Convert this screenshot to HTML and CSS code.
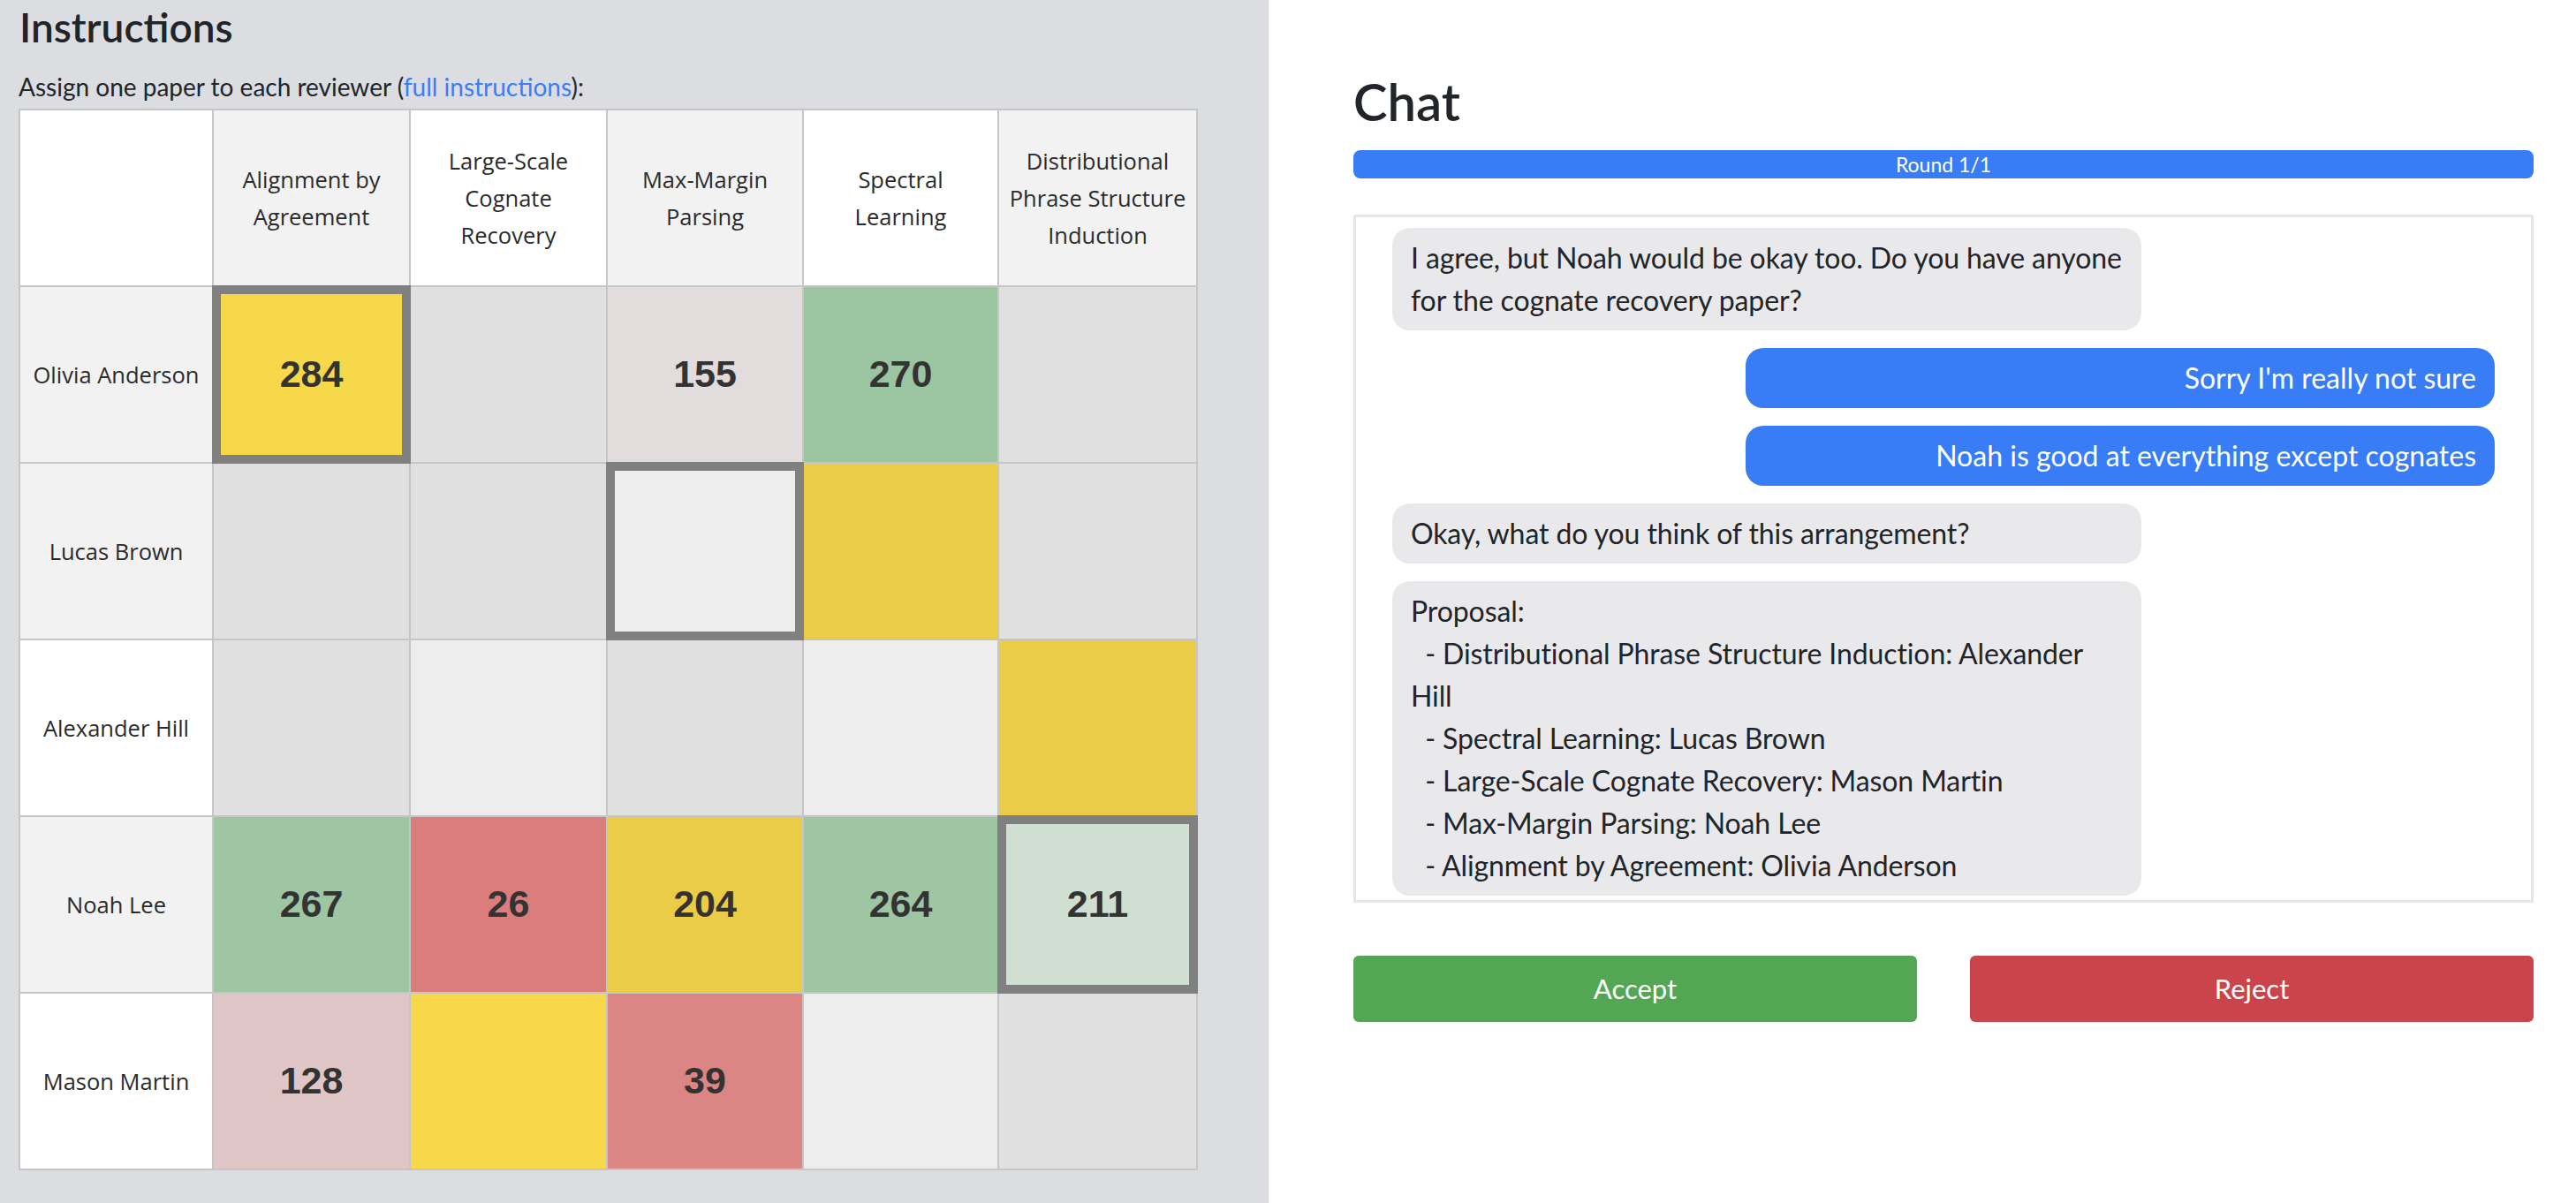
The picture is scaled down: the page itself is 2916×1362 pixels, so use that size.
FILE: index.html
```html
<!DOCTYPE html>
<html lang="en">
<head>
<meta charset="utf-8">
<title>Reviewer assignment</title>
<link rel="stylesheet" href="styles.css">
</head>
<body>
<div class="page">
  <section class="left">
    <h2 class="title">Instructions</h2>
    <p class="lead">Assign one paper to each reviewer (<a href="#" class="link">full instructions</a>):</p>
    <table class="grid">
      <colgroup><col class="w-name"><col class="w-221"><col class="w-221"><col class="w-220"><col class="w-219"><col></colgroup>
      <thead>
        <tr>
          <th class="bg-white"></th>
          <th class="bg-soft">Alignment by Agreement</th>
          <th class="bg-white">Large-Scale Cognate Recovery</th>
          <th class="bg-soft">Max-Margin Parsing</th>
          <th class="bg-white">Spectral Learning</th>
          <th class="bg-soft wide">Distributional Phrase Structure Induction</th>
        </tr>
      </thead>
      <tbody>
        <tr>
          <th class="bg-soft">Olivia Anderson</th>
          <td class="c-yellow sel">284</td>
          <td class="c-empty"></td>
          <td class="c-rose-lt">155</td>
          <td class="c-green">270</td>
          <td class="c-empty"></td>
        </tr>
        <tr>
          <th class="bg-soft">Lucas Brown</th>
          <td class="c-empty"></td>
          <td class="c-empty"></td>
          <td class="c-light sel"></td>
          <td class="c-gold"></td>
          <td class="c-empty"></td>
        </tr>
        <tr>
          <th class="bg-white">Alexander Hill</th>
          <td class="c-empty"></td>
          <td class="c-light"></td>
          <td class="c-empty"></td>
          <td class="c-light"></td>
          <td class="c-gold"></td>
        </tr>
        <tr>
          <th class="bg-soft">Noah Lee</th>
          <td class="c-green2">267</td>
          <td class="c-red">26</td>
          <td class="c-gold">204</td>
          <td class="c-green2">264</td>
          <td class="c-mint sel">211</td>
        </tr>
        <tr>
          <th class="bg-white">Mason Martin</th>
          <td class="c-rose">128</td>
          <td class="c-yellow"></td>
          <td class="c-red2">39</td>
          <td class="c-light"></td>
          <td class="c-empty"></td>
        </tr>
      </tbody>
    </table>
  </section>
  <section class="right">
    <h2 class="chat-title">Chat</h2>
    <div class="round">Round 1/1</div>
    <div class="chatbox">
      <div class="msg them">I agree, but Noah would be okay too. Do you have anyone for the cognate recovery paper?</div>
      <div class="msg me">Sorry I'm really not sure</div>
      <div class="msg me">Noah is good at everything except cognates</div>
      <div class="msg them">Okay, what do you think of this arrangement?</div>
      <div class="msg them pre">Proposal:
  - Distributional Phrase Structure Induction: Alexander Hill
  - Spectral Learning: Lucas Brown
  - Large-Scale Cognate Recovery: Mason Martin
  - Max-Margin Parsing: Noah Lee
  - Alignment by Agreement: Olivia Anderson</div>
    </div>
    <div class="actions">
      <button class="btn accept">Accept</button>
      <button class="btn reject">Reject</button>
    </div>
  </section>
</div>
</body>
</html>
```

FILE: styles.css
```css
* { box-sizing: border-box; }
html, body {
  margin: 0;
  padding: 0;
  height: 100%;
}
body {
  font-family: Lato, "Open Sans", sans-serif;
  color: #212529;
  background: #ffffff;
}
.page {
  display: flex;
  height: 100vh;
}
.left {
  width: 1436px;
  flex: none;
  background: #dcdde1;
  padding: 0 21px;
}
.title {
  margin: 3px 0 0 1px;
  font-size: 46px;
  font-weight: 600;
  line-height: 1.2;
}
.lead {
  margin: 24px 0 0 0;
  font-size: 28px;
  line-height: 1.2;
}
.link {
  color: #3b7df6;
  text-decoration: none;
}
.grid {
  margin-top: 7px;
  width: 1335px;
  table-layout: fixed;
  border-collapse: separate;
  border-spacing: 2px;
  background: #c6c6c6;
}
.w-name { width: 217px; }
.w-221 { width: 221px; }
.w-220 { width: 220px; }
.w-219 { width: 219px; }
.grid th, .grid td {
  height: 198px;
  padding: 0 10px;
  text-align: center;
  vertical-align: middle;
}
.grid th.wide { padding: 0 4px; }
.grid th {
  font-family: "Open Sans", "Noto Sans", sans-serif;
  font-weight: 400;
  font-size: 25.5px;
  line-height: 42px;
  color: #2b2b2b;
}
.grid td {
  font-family: "Liberation Sans", Arial, sans-serif;
  font-weight: 700;
  font-size: 43px;
  color: #333333;
}
.bg-white { background: #ffffff; }
.bg-soft { background: #f2f2f2; }
.c-empty { background: #e0e0e0; }
.c-light { background: #ededed; }
.c-yellow { background: #f8d84b; }
.c-gold { background: #ebcc47; }
.c-green { background: #9bc5a0; }
.c-green2 { background: #9ec6a3; }
.c-mint { background: #cfe0d2; }
.c-red { background: #db7d7c; }
.c-red2 { background: #db8684; }
.c-rose { background: #e0c6c6; }
.c-rose-lt { background: #e2dcdc; }
.sel {
  outline: 2px solid #808080;
  box-shadow: inset 0 0 0 8px #808080;
}

.right {
  flex: 1;
  padding: 0 48px 0 96px;
}
.chat-title {
  margin: 80px 0 0 0;
  font-size: 58px;
  font-weight: 600;
  line-height: 1.2;
}
.round {
  margin-top: 20px;
  height: 32px;
  border-radius: 8px;
  background: #387cf6;
  color: #ffffff;
  font-size: 23px;
  line-height: 32px;
  text-align: center;
}
.chatbox {
  margin-top: 41px;
  height: 779px;
  border: 3px solid #e6e6e6;
  padding: 12px 41px 0 41px;
  overflow: hidden;
  display: flex;
  flex-direction: column;
  gap: 20px;
}
.msg {
  width: 848px;
  flex: none;
  padding: 10px 21px;
  border-radius: 20px;
  font-size: 32px;
  line-height: 48px;
}
.them {
  align-self: flex-start;
  background: #e9e9eb;
  color: #212529;
  padding-right: 12px;
  letter-spacing: -0.1px;
}
.me {
  align-self: flex-end;
  background: #387cf6;
  color: #ffffff;
  text-align: right;
}
.pre { white-space: pre-wrap; }
.actions {
  margin-top: 60px;
  display: flex;
  gap: 60px;
}
.btn {
  flex: 1;
  height: 75px;
  border: none;
  border-radius: 6px;
  color: #ffffff;
  font-family: Lato, "Open Sans", sans-serif;
  font-size: 31px;
}
.accept { background: #53a653; }
.reject { background: #cc444b; }
```
